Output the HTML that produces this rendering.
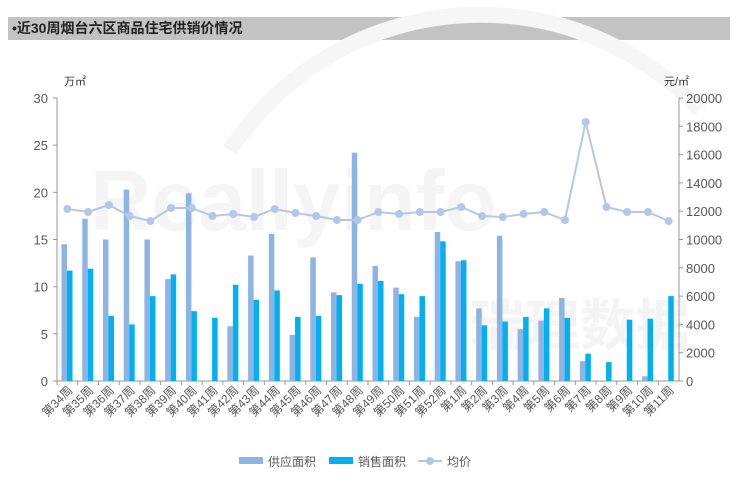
<!DOCTYPE html>
<html><head><meta charset="utf-8"><style>
body{margin:0;width:740px;height:494px;background:#fff;overflow:hidden;font-family:"Liberation Sans","Noto Sans CJK SC",sans-serif}
.t{position:absolute;left:8px;top:17px;width:722px;height:23px;background:#c3c3c3;font-size:14px;font-weight:bold;color:#222;line-height:23px;padding-left:4px;box-sizing:border-box}
svg{position:absolute;left:0;top:0}
</style></head><body>
<div class="t">•近30周烟台六区商品住宅供销价情况</div>
<svg id="s" width="740" height="494" font-family="Liberation Sans, Noto Sans CJK SC, sans-serif"></svg>
<script>
const s=document.getElementById('s');let h='';
h+='<path d="M230 150 A300 300 0 0 1 700 110" stroke="#f6f6f6" stroke-width="16" fill="none"/>';
h+='<text x="90" y="230" font-size="85" font-weight="bold" fill="#f5f5f5">Reallyinfo</text>';
h+='<text x="470" y="345" font-size="55" font-weight="bold" fill="#f4f4f4">瑞理数据</text>';
const x0=57,x1=679,yb=381,yt=98,n=30,w=(x1-x0)/n;
const sup=[14.5,17.2,15,20.3,15,10.8,19.9,0,5.8,13.3,15.6,4.9,13.1,9.4,24.2,12.2,9.9,6.8,15.8,12.7,7.7,15.4,5.5,6.4,8.8,2.1,0,0,0.5,0];
const sal=[11.7,11.9,6.9,6,9,11.3,7.4,6.7,10.2,8.6,9.6,6.8,6.9,9.1,10.3,10.6,9.2,9,14.8,12.8,5.9,6.3,6.8,7.7,6.7,2.9,2,6.5,6.6,9];
const py=[209,212,205,216,221,208,208,216,214,217,209,213,216,220,220,212,214,212,212,207,216,217,214,212,220,122,207,212,212,221];
const lab=['34','35','36','37','38','39','40','41','42','43','44','45','46','47','48','49','50','51','52','1','2','3','4','5','6','7','8','9','10','11'];
const k=(yb-yt)/30;
h+='<line x1="'+x0+'" y1="'+yt+'" x2="'+x0+'" y2="'+yb+'" stroke="#999"/>';
h+='<line x1="'+x1+'" y1="'+yt+'" x2="'+x1+'" y2="'+yb+'" stroke="#999"/>';
h+='<line x1="'+x0+'" y1="'+yb+'" x2="'+x1+'" y2="'+yb+'" stroke="#999"/>';
for(let i=0;i<=6;i++){let y=yb-i*5*k;h+='<line x1="'+(x0-4)+'" y1="'+y+'" x2="'+x0+'" y2="'+y+'" stroke="#999"/><text x="'+(x0-9)+'" y="'+(y+5)+'" font-size="13" fill="#595959" text-anchor="end">'+i*5+'</text>';}
for(let i=0;i<=10;i++){let y=yb-i*(yb-yt)/10;h+='<line x1="'+x1+'" y1="'+y+'" x2="'+(x1+4)+'" y2="'+y+'" stroke="#999"/><text x="'+(x1+7)+'" y="'+(y+5)+'" font-size="13" fill="#595959">'+i*2000+'</text>';}
h+='<text x="64" y="85" font-size="11" fill="#333">万㎡</text><text x="664" y="85" font-size="11" fill="#333">元/㎡</text>';
let pts=[];
for(let i=0;i<n;i++){let cx=x0+i*w;
h+='<line x1="'+cx+'" y1="'+yb+'" x2="'+cx+'" y2="'+(yb+4)+'" stroke="#999"/>';
if(sup[i]>0)h+='<rect x="'+(cx+4.5)+'" y="'+(yb-sup[i]*k)+'" width="5.5" height="'+sup[i]*k+'" fill="#8eb4e3"/>';
h+='<rect x="'+(cx+10)+'" y="'+(yb-sal[i]*k)+'" width="5.5" height="'+sal[i]*k+'" fill="#00b0f0"/>';
pts.push((cx+w/2)+','+py[i]);
h+='<text transform="translate('+(cx+w/2+6)+','+(yb+10)+') rotate(-45)" font-size="12" fill="#595959" text-anchor="end">第'+lab[i]+'周</text>';}
h+='<polyline points="'+pts.join(' ')+'" fill="none" stroke="#b4c7e7" stroke-width="2"/>';
pts.forEach(p=>{let [a,b]=p.split(',');h+='<circle cx="'+a+'" cy="'+b+'" r="4" fill="#b4c7e7"/>';});
h+='<rect x="239" y="457" width="24" height="7" fill="#8eb4e3"/><text x="268" y="466" font-size="12" fill="#595959">供应面积</text>';
h+='<rect x="329" y="457" width="24" height="7" fill="#00b0f0"/><text x="358" y="466" font-size="12" fill="#595959">销售面积</text>';
h+='<line x1="418" y1="461" x2="442" y2="461" stroke="#b4c7e7" stroke-width="2"/><circle cx="430" cy="461" r="4" fill="#b4c7e7"/><text x="447" y="466" font-size="12" fill="#595959">均价</text>';
s.innerHTML=h;
</script>
</body></html>
